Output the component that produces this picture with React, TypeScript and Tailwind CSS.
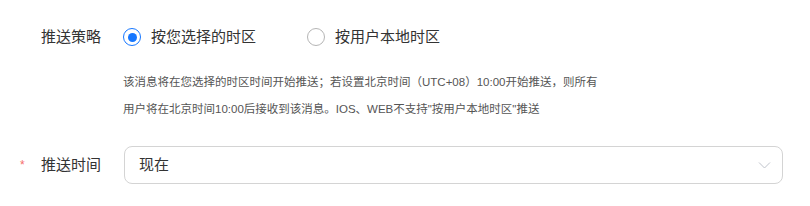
import { useState } from "react";

const font = { fontFamily: '"Liberation Sans", "Noto Sans CJK SC", sans-serif' };

function Radio({ checked, label, onClick }: { checked: boolean; label: string; onClick: () => void }) {
  return (
    <label onClick={onClick} className="flex items-center cursor-pointer">
      <span
        className={`w-[18px] h-[18px] rounded-full border flex items-center justify-center ${
          checked ? "border-[#1677ff]" : "border-[#b5b5b5]"
        }`}
      >
        {checked && <span className="w-[9px] h-[9px] rounded-full bg-[#1677ff]" />}
      </span>
      <span className="ml-[10px] text-[15px] text-[#333]">{label}</span>
    </label>
  );
}

export default function App() {
  const [mode, setMode] = useState<"self" | "local">("self");

  return (
    <div className="w-[810px] h-[206px] bg-white pt-[24px]" style={font}>
      {/* 推送策略 */}
      <div className="flex items-center h-[26px]">
        <div className="w-[123px] pl-[41px] text-[15px] text-[#333]">推送策略</div>
        <div className="flex items-center gap-[51px]">
          <Radio checked={mode === "self"} label="按您选择的时区" onClick={() => setMode("self")} />
          <Radio checked={mode === "local"} label="按用户本地时区" onClick={() => setMode("local")} />
        </div>
      </div>

      {/* 说明 */}
      <div className="mt-[19px] pl-[123px] text-[11.5px] leading-[27px] text-[#555]">
        该消息将在您选择的时区时间开始推送；若设置北京时间（UTC+08）10:00开始推送，则所有
        <br />
        用户将在北京时间10:00后接收到该消息。IOS、WEB不支持"按用户本地时区"推送
      </div>

      {/* 推送时间 */}
      <div className="mt-[23px] flex items-center">
        <div className="w-[124px] flex items-center pl-[20px]">
          <span className="w-[21px] text-[12px] text-[#f56c6c] leading-none">*</span>
          <span className="text-[15px] text-[#333]">推送时间</span>
        </div>
        <div className="w-[659px] h-[38px] border border-[#d4d4d4] rounded-[8px] flex items-center justify-between pl-[14px] pr-[11px]">
          <span className="text-[15px] text-[#333]">现在</span>
          <svg width="13" height="8" viewBox="0 0 13 8" fill="none">
            <path d="M1 1.5l5.5 5.5 5.5-5.5" stroke="#c0c4cc" strokeWidth="1" />
          </svg>
        </div>
      </div>
    </div>
  );
}
